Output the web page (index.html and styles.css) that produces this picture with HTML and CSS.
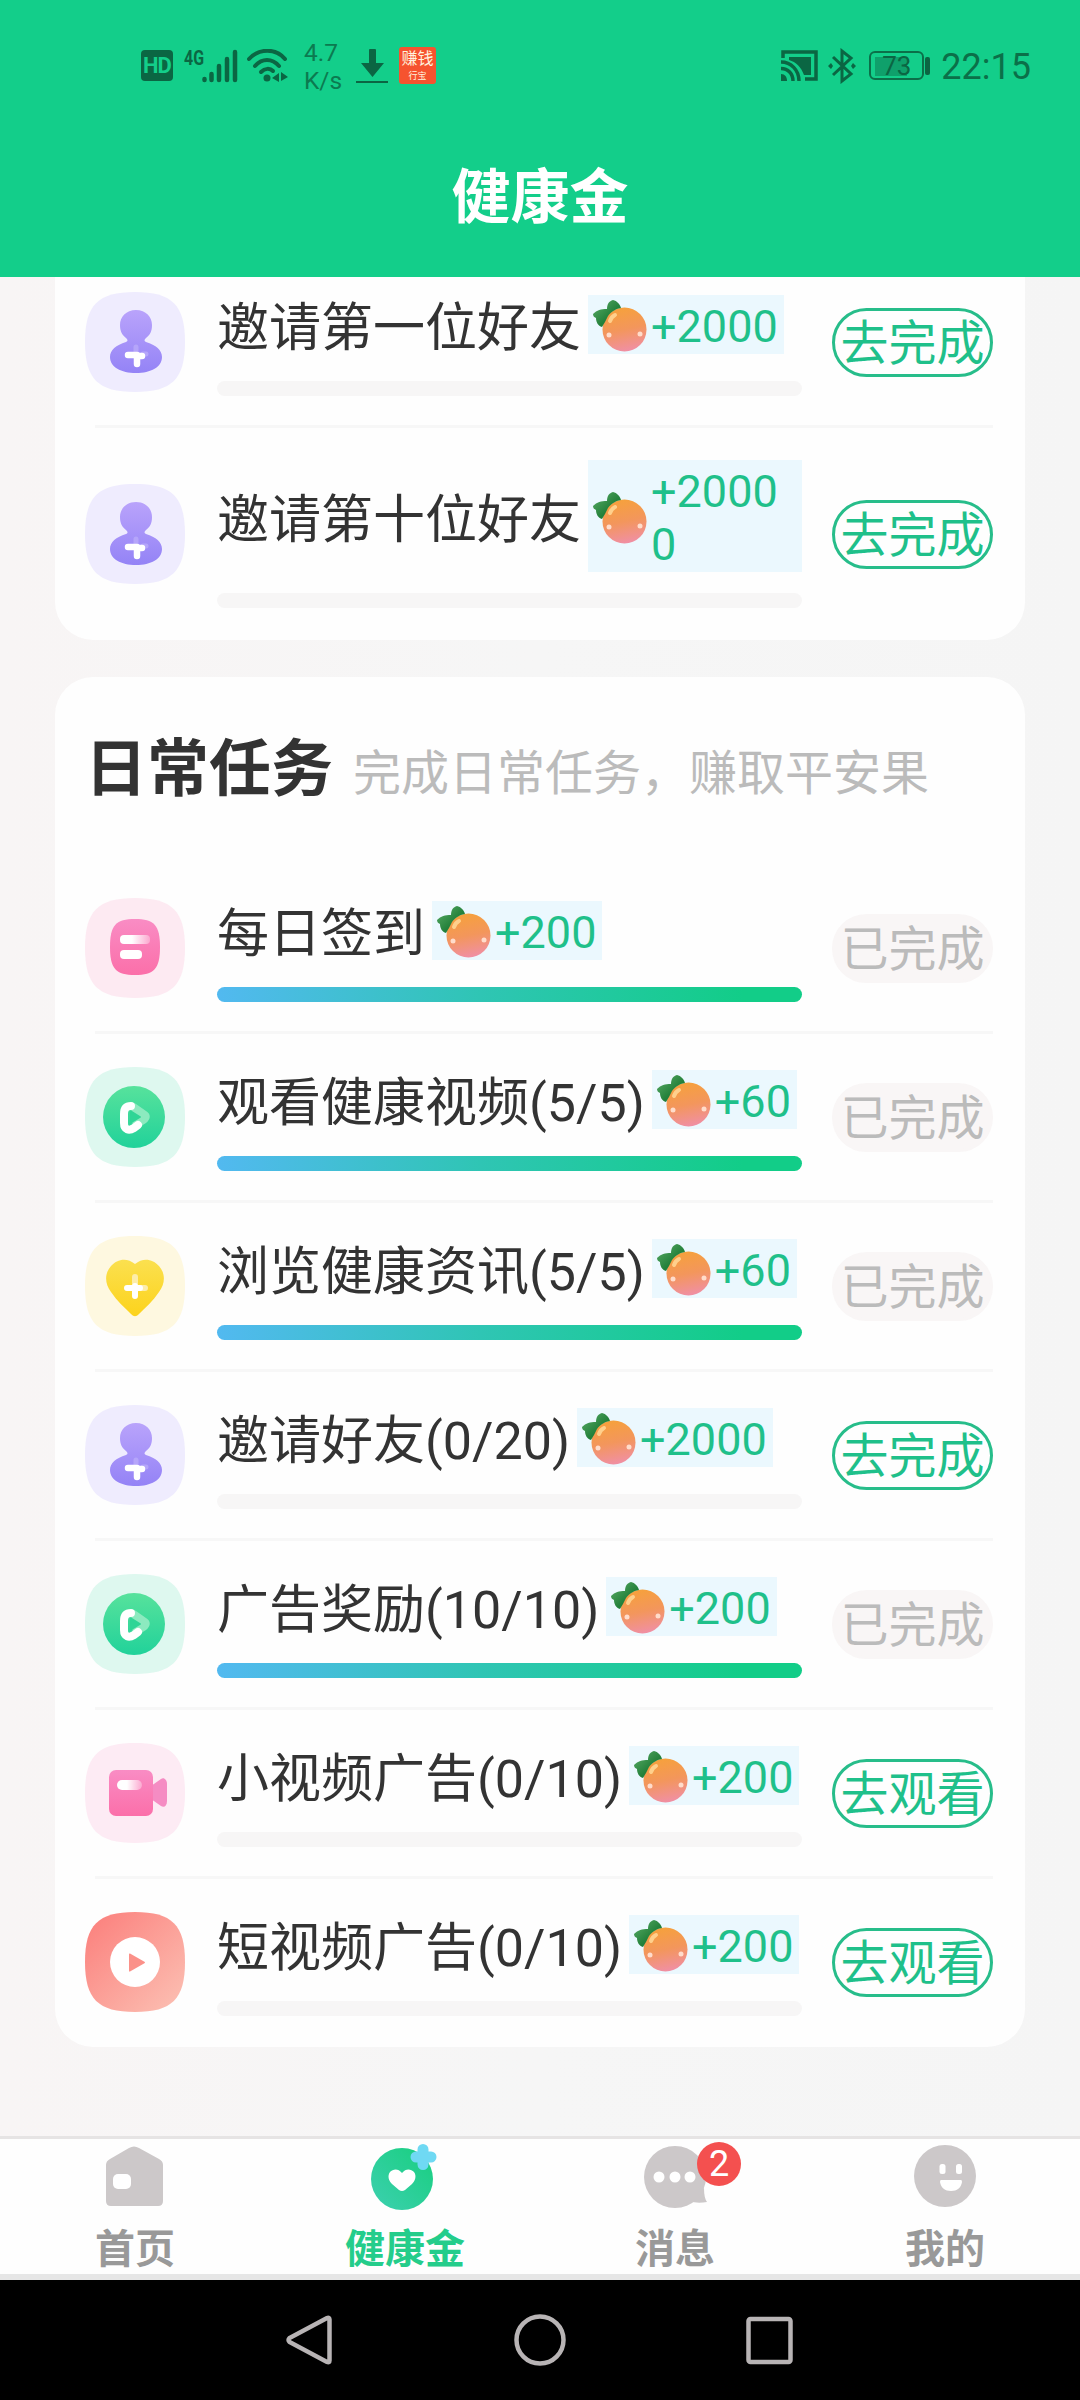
FILE: index.html
```html
<!DOCTYPE html>
<html lang="zh-CN">
<head>
<meta charset="utf-8">
<title>健康金</title>
<link rel="stylesheet" href="styles.css">
</head>
<body>
<svg class="sprite" width="0" height="0" aria-hidden="true">
  <defs>
    <linearGradient id="g-violet" x1="0" y1="0" x2="0" y2="1"><stop offset="0" stop-color="#b9a3fb"/><stop offset="1" stop-color="#9483f6"/></linearGradient>
    <linearGradient id="g-pink" x1="0" y1="0" x2="0" y2="1"><stop offset="0" stop-color="#f98cc4"/><stop offset="1" stop-color="#fb6fa9"/></linearGradient>
    <linearGradient id="g-green" x1="0" y1="0" x2="0" y2="1"><stop offset="0" stop-color="#57e29c"/><stop offset="1" stop-color="#21d29a"/></linearGradient>
    <linearGradient id="g-yellow" x1="0" y1="0" x2="0" y2="1"><stop offset="0" stop-color="#fbe04f"/><stop offset="1" stop-color="#fcd31c"/></linearGradient>
    <linearGradient id="g-coral" x1="0" y1="0" x2="1" y2="1"><stop offset="0.1" stop-color="#fb8480"/><stop offset="1" stop-color="#fcc2b5"/></linearGradient>
    <linearGradient id="g-tab" x1="1" y1="0" x2="0" y2="1"><stop offset="0.2" stop-color="#1fcf88"/><stop offset="1" stop-color="#3dd0b0"/></linearGradient>
    <linearGradient id="g-fade" x1="0" y1="0" x2="1" y2="0"><stop offset="0.4" stop-color="#fff"/><stop offset="1" stop-color="#fff" stop-opacity="0.3"/></linearGradient>
    <linearGradient id="g-peach" x1="0.4" y1="0" x2="0.6" y2="1"><stop offset="0" stop-color="#f6a13c"/><stop offset="0.5" stop-color="#f3965c"/><stop offset="1" stop-color="#f08fa6"/></linearGradient>
    <linearGradient id="g-leaf" x1="0" y1="0" x2="1" y2="1"><stop offset="0" stop-color="#5fb06a"/><stop offset="0.6" stop-color="#23803a"/></linearGradient>
  </defs>
  <symbol id="tile" viewBox="0 0 100 100"><path d="M50 0C87 0 100 13 100 50S87 100 50 100 0 87 0 50 13 0 50 0Z"/></symbol>
  <symbol id="i-invite" viewBox="0 0 100 100">
    <use href="#tile" fill="#efecfe"/>
    <path fill="url(#g-violet)" d="M51 18c10 0 16 7 16 15 0 6-2 10-6 13-2 2-2 3 0 4 10 3 16 8 16 15 0 10-11 16-26 16s-26-6-26-16c0-7 6-12 16-15 2-1 2-2 0-4-4-3-6-7-6-13 0-8 6-15 16-15Z"/>
    <path stroke="#b5a5fa" stroke-width="5" stroke-linecap="round" d="M51 55v6M58 62h3"/>
    <path stroke="#fff" stroke-width="6.500" stroke-linecap="round" stroke-linejoin="round" fill="none" d="M43 63h9v9M52 64h5"/>
  </symbol>
  <symbol id="i-sign" viewBox="0 0 100 100">
    <use href="#tile" fill="#fdeaf2"/>
    <path fill="url(#g-pink)" d="M50 21c19 0 25 6 25 28s-6 28-25 28-25-6-25-28 6-28 25-28Z"/>
    <rect x="35" y="37" width="30" height="9" rx="4" fill="url(#g-fade)"/>
    <rect x="35" y="52" width="22" height="9" rx="4" fill="#fff"/>
  </symbol>
  <symbol id="i-play" viewBox="0 0 100 100">
    <use href="#tile" fill="#def8ef"/>
    <circle cx="49" cy="50" r="31" fill="url(#g-green)"/>
    <path fill="#8ceabf" d="M46 37q2-2 5 0l10 7c5 3 5 8 0 12l-13 8Z"/>
    <path fill="none" stroke="#fff" stroke-width="8" stroke-linecap="round" stroke-linejoin="round" d="M46 39c-5 0-7 3-7 8v9c0 7 5 8 10 5l4-3"/>
    <path fill="#2fd596" d="M45 45q0-2 2-1l8 5q2 1 0 2l-10 6Z"/>
  </symbol>
  <symbol id="i-heart" viewBox="0 0 100 100">
    <use href="#tile" fill="#fef8e0"/>
    <path fill="url(#g-yellow)" d="M50 28c8-7 18-5 24 2 7 8 6 18 0 26-6 9-14 16-20 22-3 3-5 3-8 0-6-6-14-13-20-22-6-8-7-18 0-26 6-7 16-9 24-2Z"/>
    <path stroke="#fdedaa" stroke-width="6" stroke-linecap="round" d="M50 41v6M54 52h6"/>
    <path stroke="#fff" stroke-width="6" stroke-linecap="round" d="M42 52h13M50 50v10"/>
  </symbol>
  <symbol id="i-camera" viewBox="0 0 100 100">
    <use href="#tile" fill="#fdebf4"/>
    <path fill="#f58cc3" d="M66 43l10-7c3-2 6 1 6 5v17c0 5-3 7-6 5l-10-7Z"/>
    <rect x="24" y="27" width="44" height="46" rx="7" fill="url(#g-pink)"/>
    <rect x="32" y="37" width="25" height="10" rx="5" fill="url(#g-fade)"/>
  </symbol>
  <symbol id="i-video" viewBox="0 0 100 100">
    <use href="#tile" fill="url(#g-coral)"/>
    <circle cx="50" cy="50" r="25" fill="#fff"/>
    <path fill="#fb9189" d="M45 41.500l14 8q2 1 0 2l-14 8q-1 .5-1-1v-16q0-1.500 1-1Z"/>
  </symbol>
  <symbol id="i-fruit" viewBox="0 0 54 52">
    <circle cx="31.500" cy="29.500" r="22" fill="url(#g-peach)"/>
    <path fill="url(#g-leaf)" d="M0 14c4-4 8-5 14-5 0-5 2-8 6-9 4 1 7 4 8 8-6 1-10 4-13 8-2 4-4 8-6 11-4-1-6-5-6-9-2-1-3-2-3-4Z"/>
    <path stroke="#ffd08c" stroke-width="4" stroke-linecap="round" fill="none" d="M17 21c1-3 3-5 5-6"/>
    <g fill="#ffdccb"><circle cx="16" cy="35" r="2.500"/><circle cx="47" cy="34" r="2.500"/></g>
  </symbol>
</svg>

<div class="phone">
  <header class="top">
    <div class="status">
      <div class="status-left">
        <span class="hd">HD</span>
        <span class="net">4G</span>
        <svg class="signal" width="36" height="34" viewBox="0 0 36 34"><path stroke="currentColor" stroke-width="4.500" stroke-linecap="round" d="M2.500 30v1M9.500 25v6M17 17v14M25 10v21M33 3v28"/></svg>
        <svg class="wifi" width="42" height="34" viewBox="0 0 42 34"><g fill="none" stroke="currentColor" stroke-width="4" stroke-linecap="round"><path d="M2 10C12-1 29-1 38 10"/><path d="M8 17c7-8 17-8 24 0"/><path d="M14 23c4-4 9-4 12-1"/></g><circle cx="20" cy="29" r="3.500" fill="currentColor"/><path fill="currentColor" d="M25 29l7-5v9ZM41 28l-7-5v9Z"/></svg>
        <span class="speed">4.7<br>K/s</span>
        <svg class="down" width="32" height="36" viewBox="0 0 32 36"><path fill="currentColor" d="M13 2q0-1 1-1h5q1 0 1 1v13h8L16.500 29 5 15h8ZM0 33h32v2H0Z"/></svg>
        <span class="app"><b>赚钱</b><i>行宝</i></span>
      </div>
      <div class="status-right">
        <svg class="cast" width="37" height="32" viewBox="0 0 37 32"><g fill="none" stroke="currentColor" stroke-width="3.500"><path d="M2 8V2h33v27H24"/><path d="M0 12c10 0 18 8 18 19M0 18.500c7 0 12 5 12 12.500"/></g><path fill="currentColor" d="M8 7h22v18h-7C20 17 15 12 8 10ZM0 24c4 0 6 3 6 7H0Z"/></svg>
        <svg class="bt" width="28" height="36" viewBox="0 0 28 36"><path fill="none" stroke="currentColor" stroke-width="3" d="M5 9l18 17-9 7V3l9 7L5 27"/><path fill="currentColor" d="M0 18l3-3 2 3-2 3ZM28 18l-3-3-2 3 2 3Z"/></svg>
        <span class="battery"><span class="cell"><span class="level" style="width: 73%"></span><span class="pct">73</span></span><span class="cap"></span></span>
        <span class="clock">22:15</span>
      </div>
    </div>
    <h1>健康金</h1>
  </header>

  <main>
    <section class="card card-invite">
      <div class="task">
        <svg class="icon"><use href="#i-invite"/></svg>
        <div class="info"><div class="name"><span class="label">邀请第一位好友</span><span class="prize"><svg><use href="#i-fruit"/></svg><span>+2000</span></span></div><div class="bar"></div></div>
        <button class="btn">去完成</button>
      </div>
      <div class="task tall">
        <svg class="icon"><use href="#i-invite"/></svg>
        <div class="info"><div class="name"><span class="label">邀请第十位好友</span><span class="prize"><svg><use href="#i-fruit"/></svg><span>+20000</span></span></div><div class="bar"></div></div>
        <button class="btn">去完成</button>
      </div>
    </section>

    <section class="card card-daily">
      <div class="heading"><h2>日常任务</h2><p>完成日常任务，赚取平安果</p></div>
      <div class="task">
        <svg class="icon"><use href="#i-sign"/></svg>
        <div class="info"><div class="name"><span class="label">每日签到</span><span class="prize"><svg><use href="#i-fruit"/></svg><span>+200</span></span></div><div class="bar full"></div></div>
        <button class="btn done">已完成</button>
      </div>
      <div class="task">
        <svg class="icon"><use href="#i-play"/></svg>
        <div class="info"><div class="name"><span class="label">观看健康视频(5/5)</span><span class="prize"><svg><use href="#i-fruit"/></svg><span>+60</span></span></div><div class="bar full"></div></div>
        <button class="btn done">已完成</button>
      </div>
      <div class="task">
        <svg class="icon"><use href="#i-heart"/></svg>
        <div class="info"><div class="name"><span class="label">浏览健康资讯(5/5)</span><span class="prize"><svg><use href="#i-fruit"/></svg><span>+60</span></span></div><div class="bar full"></div></div>
        <button class="btn done">已完成</button>
      </div>
      <div class="task">
        <svg class="icon"><use href="#i-invite"/></svg>
        <div class="info"><div class="name"><span class="label">邀请好友(0/20)</span><span class="prize"><svg><use href="#i-fruit"/></svg><span>+2000</span></span></div><div class="bar"></div></div>
        <button class="btn">去完成</button>
      </div>
      <div class="task">
        <svg class="icon"><use href="#i-play"/></svg>
        <div class="info"><div class="name"><span class="label">广告奖励(10/10)</span><span class="prize"><svg><use href="#i-fruit"/></svg><span>+200</span></span></div><div class="bar full"></div></div>
        <button class="btn done">已完成</button>
      </div>
      <div class="task">
        <svg class="icon"><use href="#i-camera"/></svg>
        <div class="info"><div class="name"><span class="label">小视频广告(0/10)</span><span class="prize"><svg><use href="#i-fruit"/></svg><span>+200</span></span></div><div class="bar"></div></div>
        <button class="btn">去观看</button>
      </div>
      <div class="task">
        <svg class="icon"><use href="#i-video"/></svg>
        <div class="info"><div class="name"><span class="label">短视频广告(0/10)</span><span class="prize"><svg><use href="#i-fruit"/></svg><span>+200</span></span></div><div class="bar"></div></div>
        <button class="btn">去观看</button>
      </div>
    </section>
  </main>

  <nav class="tabs">
    <a class="tab"><svg width="68" height="68" viewBox="0 0 68 68"><path fill="#ccc8c9" d="M28 6q5-3 10 0l20 11q4 2 4 6v36q0 5-5 5H10q-5 0-5-5V23q0-4 4-6Z"/><rect x="12" y="32" width="18" height="15" rx="5" fill="#fff"/></svg><span class="tab-label">首页</span></a>
    <a class="tab active"><svg width="68" height="68" viewBox="0 0 68 68"><circle cx="31" cy="37" r="31" fill="url(#g-tab)"/><path fill="#fff" d="M31 31c4-5 9-4 12-1 3 4 1 9-2 12l-7 6q-3 2-6 0l-7-6c-3-3-5-8-2-12 3-3 8-4 12 1Z"/><path stroke="#6fd9f3" stroke-width="11" stroke-linecap="round" d="M52 7.500v15M45 15h15"/></svg><span class="tab-label">健康金</span></a>
    <a class="tab"><span class="badge-wrap"><svg width="68" height="68" viewBox="0 0 68 68"><path fill="#ccc8c9" d="M44 58q10 4 22 2-3-4-3-14Z"/><circle cx="34" cy="35" r="31" fill="#ccc8c9"/><g fill="#fff"><circle cx="18" cy="35" r="5.500"/><circle cx="34" cy="35" r="5.500"/><circle cx="49" cy="35" r="5.500"/></g></svg><b class="count">2</b></span><span class="tab-label">消息</span></a>
    <a class="tab"><svg width="68" height="68" viewBox="0 0 68 68"><circle cx="34" cy="34" r="31" fill="#ccc8c9"/><g fill="#fff"><rect x="28.500" y="22" width="6" height="10" rx="2.500"/><rect x="45" y="22" width="6" height="10" rx="2.500"/><path d="M30 38h20q1 0 1 2c-1 6-5 9-11 9s-10-3-11-9q0-2 1-2Z"/></g></svg><span class="tab-label">我的</span></a>
  </nav>

  <div class="system">
    <svg width="54" height="54" viewBox="0 0 54 54"><path d="M44 5q2.500-1 2.500 1.500v41q0 2.500-2.500 1.500L6.500 29q-2-2 0-4Z"/></svg>
    <svg width="54" height="54" viewBox="0 0 54 54"><circle cx="27" cy="27" r="23.500"/></svg>
    <svg width="54" height="54" viewBox="0 0 54 54"><rect x="5.500" y="6" width="42" height="43" rx="2"/></svg>
  </div>
</div>
</body>
</html>
```
FILE: styles.css
```css
* { box-sizing: border-box; }
body {
  margin: 0;
  background: #f7f6f6;
  color: #333;
  font-family: Roboto, "Noto Sans CJK SC", sans-serif;
}
.sprite { position: absolute; }
.phone {
  width: 1080px;
  height: 2400px;
  display: flex;
  flex-direction: column;
  overflow: hidden;
}
h1, h2, p { margin: 0; }
svg { flex: none; display: block; }

/* green header */
.top { height: 277px; background: #13ce8a; flex: none; }
.status {
  height: 131px;
  padding: 0 49px 0 141px;
  display: flex;
  justify-content: space-between;
  align-items: center;
  color: #0b6643;
}
.status-left, .status-right { display: flex; align-items: center; }
.hd {
  width: 32px;
  height: 31px;
  border-radius: 4px;
  background: #0b6643;
  color: #13ce8a;
  font: bold 22px/32px Roboto, sans-serif;
  letter-spacing: -1px;
  text-align: center;
}
.net {
  width: 19px;
  margin: 0 0 15px 11px;
  font: bold 21px/20px Roboto, sans-serif;
  transform: scaleX(0.76);
  transform-origin: left;
}
.signal { margin-left: -1px; }
.wifi { margin-left: 9px; }
.speed { margin: 2px 0 0 15px; width: 38px; font-size: 24.500px; line-height: 28px; color: #0c7a50; }
.down { margin-left: 14px; }
.app {
  width: 37px;
  height: 37px;
  margin-left: 11px;
  border-radius: 3px;
  background: #f6532f;
  color: #fff3df;
  display: flex;
  flex-direction: column;
  align-items: center;
  justify-content: space-evenly;
}
.app b { font-size: 16px; line-height: 18px; font-weight: normal; }
.app i { font-size: 9px; line-height: 9px; font-style: normal; }
.bt { margin-left: 10px; }
.battery { margin-left: 13px; display: flex; align-items: center; }
.cell {
  width: 55px;
  height: 29px;
  padding: 3px 4px;
  border: 2px solid #0b7049;
  border-radius: 6px;
  display: grid;
}
.level, .pct { grid-area: 1 / 1; }
.level { height: 19px; align-self: center; background: #0fa06b; }
.pct { font-size: 26px; line-height: 20px; text-align: center; }
.cap { width: 5px; height: 18px; margin-left: 1px; border-radius: 2px; background: #0b6643; }
.clock { margin: 3px 0 0 11px; font-size: 36px; line-height: 42px; color: #0b7049; }
h1 {
  color: #fff;
  font-size: 59px;
  line-height: 134px;
  text-align: center;
}

/* cards */
main { height: 1859px; flex: none; padding: 0 55px; background: linear-gradient(90deg, #f8f5f5, #f6f6f6 50%, #f5f5f5); }
.card { background: #fefefe; padding: 0 32px 0 30px; }
.card-invite { height: 363px; border-radius: 0 0 38px 38px; }
.card-daily { height: 1370px; margin-top: 37px; border-radius: 38px; }
.heading {
  height: 188px;
  padding-bottom: 3px;
  display: flex;
  align-items: center;
}
h2 { font-size: 62px; line-height: 72px; }
.heading p { margin: 9px 0 0 20px; font-size: 48px; line-height: 60px; color: #bbb; white-space: nowrap; }

.task {
  padding: 29px 0 32px;
  display: flex;
  align-items: center;
  background: linear-gradient(#f7f7f7, #f7f7f7) 10px 100% / 898px 3px no-repeat;
}
.card-invite .task:first-child { padding-top: 11px; }
.task:last-child { background: none; }
.task.tall { padding-top: 32px; }
.icon { width: 100px; height: 100px; }
.info { width: 585px; margin-left: 32px; }
.name { min-height: 72px; display: flex; align-items: center; }
.label { padding-top: 10px; font-size: 52px; line-height: 60px; white-space: nowrap; }
.prize {
  margin-left: 7px;
  padding: 5px 6px 1px 5px;
  display: flex;
  align-items: center;
  gap: 4px;
  min-width: 0;
  background: #ebf8fe;
  color: #1fc08a;
  font-size: 45px;
  line-height: 53px;
  word-break: break-all;
}
.prize svg { width: 54px; height: 52px; }
.bar { height: 15px; margin-top: 21px; border-radius: 8px; background: #f7f6f6; }
.bar.full { background: linear-gradient(90deg, #52b9f0, #2fc5b4 45%, #12cd88 90%); }
.btn {
  width: 161px;
  height: 69px;
  margin-left: 30px;
  padding: 4px 0 0;
  border: 3px solid #27bd8a;
  border-radius: 35px;
  background: none;
  color: #1fc08a;
  font: 48px/58px Roboto, "Noto Sans CJK SC", sans-serif;
  white-space: nowrap;
}
.btn.done { border-color: #f9f6f6; background: #f9f6f6; color: #bbb; }

/* tab bar */
.tabs {
  height: 144px;
  flex: none;
  display: flex;
  background: #fefefe;
  border-top: 3px solid #e6e4e4;
  border-bottom: 6px solid #e6e6e6;
}
.tab {
  flex: 1;
  display: flex;
  flex-direction: column;
  align-items: center;
  padding-top: 3px;
  color: #999;
}
.tab.active { color: #24cd8b; }
.tab-label { margin-top: 10px; font-size: 40px; font-weight: bold; line-height: 60px; }
.badge-wrap { position: relative; }
.count {
  position: absolute;
  left: 56px;
  top: 0;
  width: 44px;
  height: 44px;
  border-radius: 50%;
  background: #f4504f;
  color: #fff;
  font-size: 36px;
  font-weight: normal;
  line-height: 45px;
  text-align: center;
}

/* system navigation */
.system {
  height: 120px;
  flex: none;
  display: flex;
  justify-content: center;
  align-items: center;
  gap: 176px;
  background: #000;
}
.system svg { fill: none; stroke: #b8b4b5; stroke-width: 4.500; }
```
